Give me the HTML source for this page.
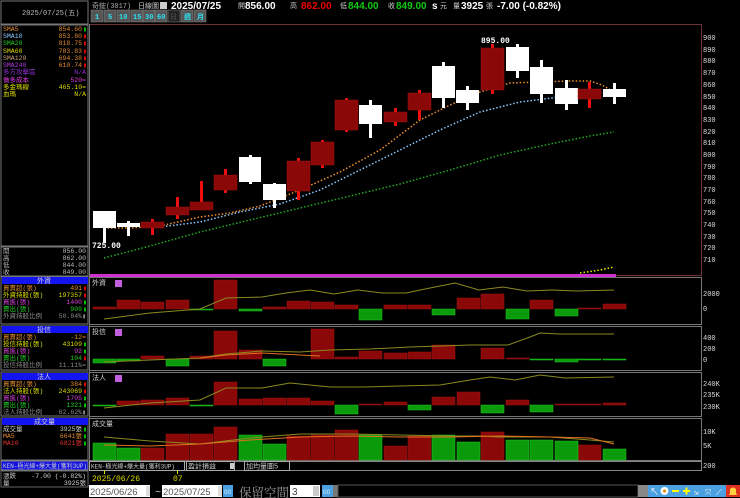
<!DOCTYPE html>
<html><head><meta charset="utf-8"><style>
html,body{margin:0;padding:0;background:#000;width:740px;height:498px;overflow:hidden}
svg{display:block;font-family:"Liberation Mono","Noto Sans CJK TC",monospace;font-size:7px}
.l text{font-size:6.5px}
.b{font-family:"Liberation Sans","Noto Sans CJK TC",sans-serif;font-weight:bold;font-size:10px}
</style></head><body>
<svg width="740" height="498" viewBox="0 0 740 498" xmlns="http://www.w3.org/2000/svg">
<rect width="740" height="498" fill="#000"/>
<!-- left panel -->
<rect x="1" y="1" width="87" height="23" fill="none" stroke="#777"/>
<text x="22" y="15" fill="#bbb">2025/07/25(五)</text>
<rect x="1" y="25" width="87" height="221" fill="none" stroke="#777"/>
<g class="l">
<text x="3" y="31" fill="#e08a30">SMA5</text><text x="82" y="31" text-anchor="end" fill="#e08a30">854.60</text><text x="83" y="31" fill="#0c0">▮</text>
<text x="3" y="38" fill="#8ac8ff">SMA10</text><text x="82" y="38" text-anchor="end" fill="#e08a30">853.80</text><text x="83" y="38" fill="#e00">▮</text>
<text x="3" y="45" fill="#2c2">SMA20</text><text x="82" y="45" text-anchor="end" fill="#e08a30">818.75</text><text x="83" y="45" fill="#e00">▮</text>
<text x="3" y="53" fill="#dd0">SMA60</text><text x="82" y="53" text-anchor="end" fill="#e08a30">783.83</text><text x="83" y="53" fill="#e00">▮</text>
<text x="3" y="60" fill="#c9a070">SMA120</text><text x="82" y="60" text-anchor="end" fill="#e08a30">694.38</text><text x="83" y="60" fill="#e00">▮</text>
<text x="3" y="67" fill="#b040e0">SMA240</text><text x="82" y="67" text-anchor="end" fill="#e08a30">610.74</text><text x="83" y="67" fill="#e00">▮</text>
<text x="3" y="74" fill="#9030d0">多方攻擊區</text><text x="86" y="74" text-anchor="end" fill="#9030d0">N/A</text>
<text x="3" y="82" fill="#e040e0">做多成本</text><text x="86" y="82" text-anchor="end" fill="#e040e0">520=</text>
<text x="3" y="89" fill="#dd0">多金瑪線</text><text x="86" y="89" text-anchor="end" fill="#dd0">465.10=</text>
<text x="3" y="96" fill="#dd0">血瑪</text><text x="86" y="96" text-anchor="end" fill="#dd0">N/A</text>
</g>
<rect x="1" y="247" width="87" height="29" fill="none" stroke="#777"/>
<g class="l">
<text x="3" y="253" fill="#bbb">開</text><text x="86" y="253" text-anchor="end" fill="#bbb">856.00</text>
<text x="3" y="260" fill="#bbb">高</text><text x="86" y="260" text-anchor="end" fill="#bbb">862.00</text>
<text x="3" y="267" fill="#bbb">低</text><text x="86" y="267" text-anchor="end" fill="#bbb">844.00</text>
<text x="3" y="274" fill="#bbb">收</text><text x="86" y="274" text-anchor="end" fill="#bbb">849.00</text>
</g>
<!-- 外資 -->
<rect x="1" y="277" width="87" height="47" fill="none" stroke="#777"/>
<rect x="2" y="277" width="86" height="7" fill="#1414f0"/><text x="37" y="283" fill="#ccc">外資</text>
<g class="l">
<text x="3" y="290" fill="#e08a30">買賣超(張)</text><text x="82" y="290" text-anchor="end" fill="#e08a30">491</text><text x="83" y="290" fill="#e00">▮</text>
<text x="3" y="297" fill="#dd0">外資持股(張)</text><text x="82" y="297" text-anchor="end" fill="#dd0">197357</text><text x="83" y="297" fill="#e00">▮</text>
<text x="3" y="304" fill="#d040d0">買進(張)</text><text x="82" y="304" text-anchor="end" fill="#d040d0">1400</text><text x="83" y="304" fill="#0c0">▮</text>
<text x="3" y="311" fill="#2c2">賣出(張)</text><text x="82" y="311" text-anchor="end" fill="#2c2">909</text><text x="83" y="311" fill="#0c0">▮</text>
<text x="3" y="318" fill="#888">外資持股比例</text><text x="86" y="318" text-anchor="end" fill="#888">50.84%▮</text>
</g>
<!-- 投信 -->
<rect x="1" y="326" width="87" height="44" fill="none" stroke="#777"/>
<rect x="2" y="326" width="86" height="7" fill="#1414f0"/><text x="37" y="332" fill="#ccc">投信</text>
<g class="l">
<text x="3" y="339" fill="#e08a30">買賣超(張)</text><text x="86" y="339" text-anchor="end" fill="#e08a30">-12=</text>
<text x="3" y="346" fill="#dd0">投信持股(張)</text><text x="82" y="346" text-anchor="end" fill="#dd0">43109</text><text x="83" y="346" fill="#0c0">▮</text>
<text x="3" y="353" fill="#d040d0">買進(張)</text><text x="82" y="353" text-anchor="end" fill="#d040d0">92</text><text x="83" y="353" fill="#0c0">▮</text>
<text x="3" y="360" fill="#2c2">賣出(張)</text><text x="82" y="360" text-anchor="end" fill="#2c2">104</text><text x="83" y="360" fill="#e00">▮</text>
<text x="3" y="367" fill="#888">投信持股比例</text><text x="86" y="367" text-anchor="end" fill="#888">11.11%=</text>
</g>
<!-- 法人 -->
<rect x="1" y="372" width="87" height="44" fill="none" stroke="#777"/>
<rect x="2" y="373" width="86" height="7" fill="#1414f0"/><text x="37" y="379" fill="#ccc">法人</text>
<g class="l">
<text x="3" y="386" fill="#e08a30">買賣超(張)</text><text x="82" y="386" text-anchor="end" fill="#e08a30">384</text><text x="83" y="386" fill="#e00">▮</text>
<text x="3" y="393" fill="#dd0">法人持股(張)</text><text x="82" y="393" text-anchor="end" fill="#dd0">243069</text><text x="83" y="393" fill="#e00">▮</text>
<text x="3" y="400" fill="#d040d0">買進(張)</text><text x="82" y="400" text-anchor="end" fill="#d040d0">1705</text><text x="83" y="400" fill="#0c0">▮</text>
<text x="3" y="407" fill="#2c2">賣出(張)</text><text x="82" y="407" text-anchor="end" fill="#2c2">1321</text><text x="83" y="407" fill="#0c0">▮</text>
<text x="3" y="414" fill="#888">法人持股比例</text><text x="86" y="414" text-anchor="end" fill="#888">62.62%▮</text>
</g>
<!-- 成交量 -->
<rect x="1" y="418" width="87" height="42" fill="none" stroke="#777"/>
<rect x="2" y="418" width="86" height="7" fill="#1414f0"/><text x="34" y="424" fill="#ccc">成交量</text>
<g class="l">
<text x="3" y="431" fill="#ccc">成交量</text><text x="82" y="431" text-anchor="end" fill="#ccc">3925張</text><text x="83" y="431" fill="#0c0">▮</text>
<text x="3" y="438" fill="#e08a30">MA5</text><text x="82" y="438" text-anchor="end" fill="#e08a30">6641張</text><text x="83" y="438" fill="#0c0">▮</text>
<text x="3" y="445" fill="#e03030">MA10</text><text x="82" y="445" text-anchor="end" fill="#e03030">6821張</text><text x="83" y="445" fill="#0c0">▮</text>
</g>
<rect x="1" y="461" width="87" height="9" fill="#1010e0" stroke="#888"/>
<text x="3" y="468" fill="#ccc" font-size="6">KEN-極光線+爆大量(獲利3UP)</text>
<rect x="1" y="471" width="87" height="16" fill="none" stroke="#666"/>
<g class="l">
<text x="3" y="478" fill="#ccc">漲跌</text><text x="86" y="478" text-anchor="end" fill="#ccc">-7.00 (-0.82%)</text>
<text x="3" y="485" fill="#ccc">量</text><text x="86" y="485" text-anchor="end" fill="#ccc">3925張</text>
</g>

<!-- top bar -->
<text x="92" y="8" fill="#aaa">奇鋐(3017)</text>
<text x="138" y="8" fill="#ccc">日線圖</text>
<rect x="160" y="2" width="7" height="7" fill="#ccc"/>
<text x="171" y="9" class="b" fill="#fff">2025/07/25</text>
<text x="238" y="8" fill="#ccc">開</text><text x="245" y="9" class="b" fill="#fff">856.00</text>
<text x="290" y="8" fill="#ccc">高</text><text x="301" y="9" class="b" fill="#e00">862.00</text>
<text x="340" y="8" fill="#ccc">低</text><text x="348" y="9" class="b" fill="#1c1">844.00</text>
<text x="388" y="8" fill="#ccc">收</text><text x="396" y="9" class="b" fill="#1c1">849.00</text>
<text x="432" y="9" class="b" fill="#fff">s</text><text x="440" y="8" fill="#ccc">元</text>
<text x="453" y="8" fill="#ccc">量</text><text x="461" y="9" class="b" fill="#fff">3925</text><text x="486" y="8" fill="#ccc">張</text>
<text x="497" y="9" class="b" fill="#fff">-7.00 (-0.82%)</text>
<!-- buttons -->
<g fill="#555" stroke="#888" stroke-width="0.5">
<rect x="91" y="10" width="12" height="12"/><rect x="104" y="10" width="12" height="12"/><rect x="117" y="10" width="13" height="12"/><rect x="131" y="10" width="12" height="12"/><rect x="143" y="10" width="12" height="12"/><rect x="155" y="10" width="12" height="12"/><rect x="168" y="10" width="12" height="12" fill="#222"/><rect x="181" y="10" width="12" height="12"/><rect x="194" y="10" width="12" height="12"/>
</g>
<g fill="#2ee0f0" font-weight="bold">
<text x="95" y="19">1</text><text x="108" y="19">5</text><text x="119" y="19">10</text><text x="133" y="19">15</text><text x="145" y="19">30</text><text x="157" y="19">60</text><text x="170" y="19" fill="#444">日</text><text x="184" y="19">週</text><text x="197" y="19">月</text>
</g>

<!-- main chart frame -->
<line x1="89" y1="24.5" x2="701.5" y2="24.5" stroke="#703038"/>
<line x1="89.5" y1="24" x2="89.5" y2="462" stroke="#777"/>
<line x1="701.5" y1="24" x2="701.5" y2="276" stroke="#703038"/>
<g fill="#ddd">
<text x="703" y="40">900</text><text x="703" y="52">890</text><text x="703" y="63">880</text><text x="703" y="75">870</text><text x="703" y="87">860</text><text x="703" y="99">850</text><text x="703" y="110">840</text><text x="703" y="122">830</text><text x="703" y="134">820</text><text x="703" y="145">810</text><text x="703" y="157">800</text><text x="703" y="169">790</text><text x="703" y="180">780</text><text x="703" y="192">770</text><text x="703" y="204">760</text><text x="703" y="215">750</text><text x="703" y="227">740</text><text x="703" y="239">730</text><text x="703" y="250">720</text><text x="703" y="262">710</text>
</g>
<!-- MAs -->
<polyline fill="none" stroke="#2a2" stroke-width="1.5" stroke-dasharray="1.5,2" points="104,258 150,246 200,232 250,220 300,208 350,196 400,184 450,170 500,155 550,144 590,136 614,132"/>
<polyline fill="none" stroke="#8ac8ff" stroke-width="1.5" stroke-dasharray="1.5,2" points="96,225 130,226 160,227 200,222 240,212 280,204 320,190 360,170 400,150 440,130 480,112 520,102 560,97 590,94 615,91"/>
<polyline fill="none" stroke="#f09030" stroke-width="1.5" stroke-dasharray="1.5,2" points="104,228 130,228 160,226 200,217 230,213 260,206 300,190 340,172 380,150 420,120 450,105 480,92 510,83 540,82 570,81 590,81 602,85 614,92"/>
<!-- candles -->
<g fill="#fff">
<rect x="93" y="211" width="23" height="17"/><rect x="103" y="228" width="3" height="15"/>
<rect x="117" y="223" width="23" height="4"/><rect x="127" y="221" width="3" height="15"/>
<rect x="239" y="157" width="22" height="25"/><rect x="249" y="155" width="3" height="29"/>
<rect x="263" y="184" width="23" height="16"/><rect x="273" y="183" width="3" height="25"/>
<rect x="359" y="105" width="23" height="19"/><rect x="369" y="100" width="3" height="38"/>
<rect x="432" y="66" width="23" height="32"/><rect x="442" y="62" width="3" height="46"/>
<rect x="456" y="90" width="23" height="13"/><rect x="466" y="86" width="3" height="24"/>
<rect x="506" y="47" width="23" height="24"/><rect x="516" y="44" width="3" height="34"/>
<rect x="530" y="67" width="23" height="27"/><rect x="540" y="60" width="3" height="43"/>
<rect x="555" y="88" width="23" height="16"/><rect x="565" y="80" width="3" height="30"/>
<rect x="603" y="89" width="23" height="8"/><rect x="613" y="83" width="3" height="21"/>
</g>
<g fill="#ee1010">
<rect x="151" y="219" width="3" height="16"/><rect x="176" y="197" width="3" height="22"/><rect x="200" y="181" width="3" height="29"/><rect x="224" y="169" width="3" height="24"/><rect x="297" y="158" width="3" height="42"/><rect x="321" y="140" width="3" height="28"/><rect x="345" y="98" width="3" height="34"/><rect x="394" y="108" width="3" height="18"/><rect x="418" y="90" width="3" height="30"/><rect x="491" y="44" width="3" height="50"/><rect x="588" y="82" width="3" height="26"/>
</g>
<g fill="#8a0808" stroke="#a01010" stroke-width="0.5">
<rect x="141" y="222" width="23" height="6"/><rect x="166" y="207" width="23" height="8"/><rect x="190" y="202" width="23" height="8"/><rect x="214" y="175" width="23" height="15"/><rect x="287" y="161" width="23" height="30"/><rect x="311" y="142" width="23" height="23"/><rect x="335" y="100" width="23" height="30"/><rect x="384" y="112" width="23" height="10"/><rect x="408" y="93" width="23" height="17"/><rect x="481" y="48" width="23" height="42"/><rect x="578" y="89" width="23" height="10"/>
</g>
<text x="481" y="43" fill="#fff" font-weight="bold" font-size="8">895.00</text>
<text x="92" y="248" fill="#fff" font-weight="bold" font-size="8">725.00</text>
<!-- bottom of main -->
<rect x="90" y="274" width="526" height="3" fill="#d030d0"/>
<line x1="616" y1="275.5" x2="701" y2="275.5" stroke="#703038"/>
<polyline fill="none" stroke="#ee0" stroke-width="1.5" stroke-dasharray="1.5,2" points="580,273 600,270 614,267"/>

<!-- sub panels frames -->
<g fill="none" stroke="#777">
<rect x="89.5" y="277.5" width="612" height="47"/>
<rect x="89.5" y="326.5" width="612" height="44"/>
<rect x="89.5" y="372.5" width="612" height="44"/>
<rect x="89.5" y="418.5" width="612" height="42"/>
</g>
<text x="92" y="285" fill="#ccc">外資</text><rect x="115" y="280" width="7" height="7" fill="#c060e0"/>
<text x="92" y="334" fill="#ccc">投信</text><rect x="115" y="329" width="7" height="7" fill="#c060e0"/>
<text x="92" y="380" fill="#ccc">法人</text><rect x="115" y="375" width="7" height="7" fill="#c060e0"/>
<text x="92" y="426" fill="#ccc">成交量</text>
<g fill="#ddd">
<text x="703" y="296">2000</text><text x="703" y="311">0</text>
<text x="703" y="340">400</text><text x="703" y="351">200</text><text x="703" y="362">0</text>
<text x="703" y="386">240K</text><text x="703" y="397">235K</text><text x="703" y="409">230K</text>
<text x="703" y="434">10K</text><text x="703" y="448">5K</text><text x="703" y="468">200</text>
</g>
<!-- 外資 bars zero 309 -->
<g fill="#8a0808" stroke="#a01010" stroke-width="0.5">
<rect x="93" y="307" width="23" height="2"/><rect x="117" y="300" width="23" height="9"/><rect x="141" y="302" width="23" height="7"/><rect x="166" y="300" width="23" height="9"/><rect x="214" y="280" width="23" height="29"/><rect x="263" y="307" width="23" height="2"/><rect x="287" y="301" width="23" height="8"/><rect x="311" y="302" width="23" height="7"/><rect x="335" y="305" width="23" height="4"/><rect x="384" y="305" width="23" height="4"/><rect x="408" y="305" width="23" height="4"/><rect x="457" y="298" width="23" height="11"/><rect x="481" y="294" width="23" height="15"/><rect x="530" y="300" width="23" height="9"/><rect x="578" y="308" width="23" height="1"/><rect x="603" y="304" width="23" height="5"/>
</g>
<g fill="#0a9a0a" stroke="#2c2" stroke-width="0.5">
<rect x="190" y="309" width="23" height="1"/><rect x="239" y="309" width="23" height="2"/><rect x="359" y="309" width="23" height="11"/><rect x="432" y="309" width="23" height="6"/><rect x="506" y="309" width="23" height="10"/><rect x="555" y="309" width="23" height="7"/>
</g>
<polyline fill="none" stroke="#8a8a20" points="104,319 150,313 200,309 226,298 262,297 286,293 310,290 334,294 358,290 382,293 406,293 430,288 455,283 479,290 503,287 527,291 552,290 576,291 614,290"/>
<!-- 投信 zero 359 -->
<g fill="#8a0808" stroke="#a01010" stroke-width="0.5">
<rect x="141" y="356" width="23" height="3"/><rect x="190" y="356" width="23" height="3"/><rect x="214" y="331" width="23" height="28"/><rect x="239" y="350" width="23" height="9"/><rect x="311" y="329" width="23" height="30"/><rect x="335" y="357" width="23" height="2"/><rect x="359" y="351" width="23" height="8"/><rect x="384" y="353" width="23" height="6"/><rect x="408" y="352" width="23" height="7"/><rect x="432" y="345" width="23" height="14"/><rect x="481" y="348" width="23" height="11"/><rect x="506" y="358" width="23" height="1"/>
</g>
<g fill="#0a9a0a" stroke="#2c2" stroke-width="0.5">
<rect x="93" y="359" width="23" height="4"/><rect x="117" y="359" width="23" height="2"/><rect x="166" y="359" width="23" height="7"/><rect x="263" y="359" width="23" height="7"/><rect x="530" y="359" width="23" height="1"/><rect x="555" y="359" width="23" height="3"/><rect x="578" y="359" width="23" height="1"/><rect x="603" y="359" width="23" height="1"/>
</g>
<polyline fill="none" stroke="#8a8a20" points="104,362 150,360 200,358 226,354 262,351 300,352 330,350 370,349 410,347 440,346 470,345 508,345 530,337 540,333 560,334 614,334"/>
<polyline fill="none" stroke="#e07020" points="200,358 226,355 262,353 300,355 320,356"/>
<!-- 法人 zero 405 -->
<g fill="#8a0808" stroke="#a01010" stroke-width="0.5">
<rect x="117" y="401" width="23" height="4"/><rect x="141" y="400" width="23" height="5"/><rect x="166" y="398" width="23" height="7"/><rect x="214" y="382" width="23" height="23"/><rect x="239" y="399" width="23" height="6"/><rect x="263" y="398" width="23" height="7"/><rect x="287" y="398" width="23" height="7"/><rect x="311" y="401" width="23" height="4"/><rect x="359" y="404" width="23" height="1"/><rect x="384" y="402" width="23" height="3"/><rect x="432" y="397" width="23" height="8"/><rect x="457" y="392" width="23" height="13"/><rect x="506" y="400" width="23" height="5"/><rect x="555" y="404" width="23" height="1"/><rect x="578" y="404" width="23" height="1"/><rect x="603" y="403" width="23" height="2"/>
</g>
<g fill="#0a9a0a" stroke="#2c2" stroke-width="0.5">
<rect x="93" y="405" width="23" height="1"/><rect x="190" y="405" width="23" height="1"/><rect x="335" y="405" width="23" height="9"/><rect x="408" y="405" width="23" height="5"/><rect x="481" y="405" width="23" height="8"/><rect x="530" y="405" width="23" height="7"/>
</g>
<polyline fill="none" stroke="#8a8a20" points="104,408 150,403 200,400 226,388 262,388 290,383 330,387 365,387 400,386 440,385 470,380 490,377 515,380 540,375 565,378 614,377"/>
<!-- volume base 460 -->
<g fill="#8a0808" stroke="#a01010" stroke-width="0.5">
<rect x="141" y="448" width="23" height="12"/><rect x="166" y="434" width="23" height="26"/><rect x="190" y="434" width="23" height="26"/><rect x="214" y="427" width="23" height="33"/><rect x="287" y="436" width="23" height="24"/><rect x="311" y="435" width="23" height="25"/><rect x="335" y="430" width="23" height="30"/><rect x="384" y="446" width="23" height="14"/><rect x="408" y="436" width="23" height="24"/><rect x="481" y="432" width="23" height="28"/><rect x="578" y="445" width="23" height="15"/>
</g>
<g fill="#0a9a0a" stroke="#2c2" stroke-width="0.5">
<rect x="93" y="443" width="23" height="17"/><rect x="117" y="448" width="23" height="12"/><rect x="239" y="435" width="23" height="25"/><rect x="263" y="444" width="23" height="16"/><rect x="359" y="435" width="23" height="25"/><rect x="432" y="435" width="23" height="25"/><rect x="457" y="442" width="23" height="18"/><rect x="506" y="440" width="23" height="20"/><rect x="530" y="440" width="23" height="20"/><rect x="555" y="441" width="23" height="19"/><rect x="603" y="449" width="23" height="11"/>
</g>
<polyline fill="none" stroke="#8a8a20" points="104,437 150,441 200,444 250,438 300,434 350,434 400,435 450,436 480,436 500,437 550,437 590,440 614,442"/>
<polyline fill="none" stroke="#e07020" points="104,445 150,446 200,444 250,440 300,437 350,436 400,437 450,437 500,436 550,437 590,438 614,444"/>

<!-- indicator bar -->
<rect x="89.5" y="461.5" width="612" height="9" fill="none" stroke="#888"/>
<rect x="89.5" y="461.5" width="95" height="9" fill="none" stroke="#aaa"/>
<text x="91" y="468.5" fill="#ccc" font-size="6">KEN-極光線+爆大量(獲利3UP)</text>
<rect x="186.5" y="461.5" width="48" height="9" fill="none" stroke="#aaa"/>
<text x="188" y="468.5" fill="#ccc">盈計損益</text>
<rect x="230" y="463" width="4" height="6" fill="#ccc"/>
<rect x="244.5" y="461.5" width="45" height="9" fill="none" stroke="#aaa"/>
<text x="246" y="468.5" fill="#ccc">加均量圖5</text>
<line x1="104.5" y1="470" x2="104.5" y2="474" stroke="#dd0"/>
<line x1="177.5" y1="470" x2="177.5" y2="474" stroke="#dd0"/>
<text x="92" y="481" fill="#dd0" font-size="8">2025/06/26</text>
<text x="173" y="481" fill="#dd0" font-size="8">07</text>

<!-- bottom controls -->
<rect x="89" y="485" width="61" height="12" fill="#fff"/>
<text x="90" y="495" fill="#555" font-family="Liberation Sans" font-size="9.5">2025/06/26</text>
<rect x="146" y="486" width="4" height="10" fill="#ddd"/>
<text x="155" y="495" fill="#ccc" font-size="10">~</text>
<rect x="162" y="485" width="60" height="12" fill="#fff"/>
<text x="163" y="495" fill="#555" font-family="Liberation Sans" font-size="9.5">2025/07/25</text>
<rect x="218" y="486" width="4" height="10" fill="#ddd"/>
<rect x="223" y="485" width="10" height="12" fill="#4aa0e0"/>
<text x="224" y="494" fill="#cef" font-size="6">GO</text>
<text x="239" y="497" fill="#999" font-family="Noto Serif CJK SC, serif" font-size="12.5">保留空間</text>
<rect x="290" y="485" width="30" height="12" fill="#fff"/>
<text x="292" y="495" fill="#444" font-family="Liberation Sans" font-size="10">3</text>
<rect x="313" y="486" width="6" height="10" fill="#ccc"/>
<rect x="322" y="485" width="11" height="12" fill="#4aa0e0"/>
<text x="323" y="494" fill="#cef" font-size="6">GO</text>
<rect x="333" y="485" width="5" height="12" fill="#777"/>
<rect x="338" y="485" width="300" height="12" fill="#000" stroke="#555"/>
<rect x="638" y="485" width="10" height="12" fill="#888"/>
<g fill="#4aa0e0">
<rect x="648" y="485" width="11" height="12"/><rect x="659" y="485" width="11" height="12"/><rect x="670" y="485" width="11" height="12"/><rect x="681" y="485" width="11" height="12"/><rect x="692" y="485" width="11" height="12"/><rect x="703" y="485" width="11" height="12"/><rect x="714" y="485" width="12" height="12"/>
</g>
<rect x="726" y="485" width="14" height="12" fill="#e03020"/>
<text x="650" y="495" fill="#fff" font-size="9">↖</text>
<circle cx="664.5" cy="491" r="4" fill="#fff"/><circle cx="664.5" cy="491" r="1.5" fill="#e80"/>
<rect x="672" y="490" width="7" height="2" fill="#ff0"/>
<rect x="683" y="490" width="7" height="2" fill="#ff0"/><rect x="685.5" y="487.5" width="2" height="7" fill="#ff0"/>
<text x="694" y="495" fill="#fff" font-size="8">⇲</text>
<text x="705" y="495" fill="#fff" font-size="8">⤧</text>
<text x="716" y="495" fill="#fff" font-size="8">⟋</text>
<path d="M729,495 L737,495 L736,493 L736,489 Q733,486 730,489 L730,493 Z" fill="#ffd040"/>
</svg>
</body></html>
